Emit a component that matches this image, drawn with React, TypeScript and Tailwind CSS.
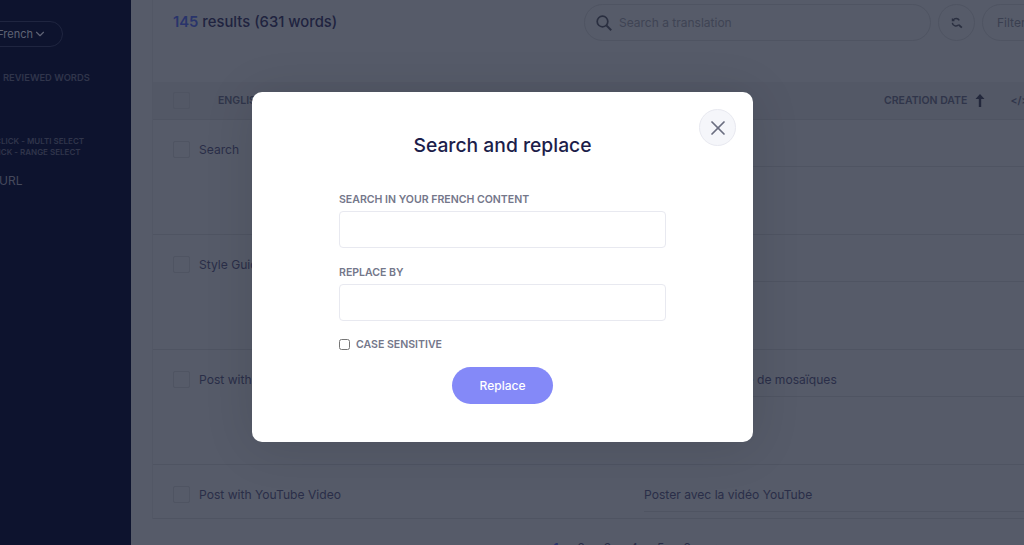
import { ChevronDown, X } from "lucide-react";

const rows = [
  { en: "Search", fr: "", h: "h-[115px]" },
  { en: "Style Guide", fr: "", h: "h-[115px]" },
  { en: "Post with Gallery", fr: "Poster avec galerie de mosaïques", h: "h-[115px]" },
  { en: "Post with YouTube Video", fr: "Poster avec la vidéo YouTube", h: "h-[55px]" },
];

function SearchReplaceIcon() {
  return (
    <svg width="12" height="12" viewBox="0 0 12 12" fill="none" stroke="currentColor" strokeWidth="1.4">
      <path d="M8.3 3.4A3.6 3.6 0 0 0 2.1 3.2" />
      <path d="M1.3 5.8A3.6 3.6 0 0 0 7.7 7.6" />
      <path d="M7.8 7.8 10.8 10.6" strokeWidth="1.8" />
      <path d="M0.8 3.6H3.4M1.4 1.4V3.6" strokeWidth="1.2" />
    </svg>
  );
}

function SearchIcon() {
  return (
    <svg width="16" height="16" viewBox="0 0 16 16" fill="none" stroke="currentColor" strokeWidth="1.7">
      <circle cx="6.5" cy="6.5" r="5.3" />
      <path d="M10.4 10.4 15.2 15.2" strokeWidth="2" />
    </svg>
  );
}

function SortArrow() {
  return (
    <svg width="10" height="13" viewBox="0 0 10 13" className="ml-[8px] shrink-0 text-[#23283c]" fill="currentColor">
      <path d="M5 0 9.5 5H6.2V13H3.8V5H0.5Z" />
    </svg>
  );
}

export default function App() {
  return (
    <div className="relative flex h-[545px] w-[1024px] overflow-hidden bg-[#565b69] font-['Inter',sans-serif]">
      {/* Sidebar */}
      <aside className="w-[131px] shrink-0 overflow-hidden bg-[#0d132e]">
        <div className="-ml-[40px] w-[171px]">
          <div className="mt-[21px] ml-[12px] flex h-[26px] w-[91px] items-center justify-end rounded-full border border-[#1f2540] pr-[15px] text-[11px] leading-[14px] whitespace-nowrap text-[#5f6375]">
            French <ChevronDown size={14} strokeWidth={2} />
          </div>
          <p className="mt-[25px] ml-[43px] text-[9.4px] leading-[11px] font-semibold whitespace-nowrap text-[#30354b]">
            REVIEWED WORDS
          </p>
          <div className="mt-[53px] ml-[35px] text-[8px] leading-[11px] font-semibold whitespace-nowrap text-[#30354b]">
            <p>CLICK - MULTI SELECT</p>
            <p className="-ml-[1px]">LICK - RANGE SELECT</p>
          </div>
          <p className="mt-[15px] ml-[39px] text-[12px] leading-[15px] text-[#45495c]">URL</p>
        </div>
      </aside>

      {/* Main */}
      <main className="flex min-w-0 flex-1 flex-col pl-[21px]">
        <div className="flex h-[520px] flex-col border-l border-[#525765]">
          <header className="flex h-[82px] shrink-0 pt-[4px] pl-[20px]">
            <h1 className="mt-[8px] w-[411px] shrink-0 text-[14.8px] leading-[20px] font-medium text-[#20233f]">
              <span className="font-semibold text-[#29346b]">145</span> results (631 words)
            </h1>
            <div className="flex h-[37px] w-[347px] shrink-0 items-center gap-[7px] rounded-full border border-[#4f5462] pl-[11px] text-[12px] text-[#3f4454]">
              <span className="text-[#2a2f40]">
                <SearchIcon />
              </span>
              Search a translation
            </div>
            <div className="ml-[7px] flex size-[37px] shrink-0 items-center justify-center rounded-full border border-[#4f5462] text-[#2a2f40]">
              <SearchReplaceIcon />
            </div>
            <div className="ml-[7px] flex h-[37px] w-[80px] shrink-0 items-center rounded-full border border-[#4f5462] pl-[14px] text-[12px] text-[#3a3f50]">
              Filter
            </div>
          </header>

          <div className="flex h-[38px] shrink-0 items-center border-b border-[#4f5462] bg-[#535866] pl-[20px] text-[10.5px] font-semibold text-[#30354a]">
            <span className="size-[17px] shrink-0 rounded-[2px] border border-[#4f5462]" />
            <span className="ml-[28px] w-[666px] shrink-0">ENGLISH</span>
            <span className="shrink-0">CREATION DATE</span>
            <SortArrow />
            <span className="ml-[25px] shrink-0">&lt;/&gt;</span>
          </div>

          {rows.map((row) => (
            <div key={row.en} className={`${row.h} flex shrink-0 border-b border-[#4f5462] pl-[20px] last:h-[54px]`}>
              <span className="mt-[21px] size-[17px] shrink-0 rounded-[2px] border border-[#4f5462]" />
              <span className="mt-[21px] ml-[9px] w-[445px] shrink-0 text-[12.1px] leading-[17px] text-[#2a2e48]">
                {row.en}
              </span>
              <div className="h-[47px] flex-1 border-b border-[#4f5462] pt-[21px] text-[12.1px] leading-[17px] text-[#2a2e48]">
                {row.fr}
              </div>
            </div>
          ))}
        </div>

        <div className="mt-[21px] flex gap-[19px] pl-[371px] text-[12px] leading-[15px] text-[#2a2e48]">
          <span>←</span>
          <span className="font-semibold text-[#29346b]">1</span>
          <span>2</span>
          <span>3</span>
          <span>4</span>
          <span>5</span>
          <span>6</span>
          <span>→</span>
        </div>
      </main>

      {/* Modal */}
      <div className="absolute top-[92px] left-[252px] flex h-[350px] w-[501px] flex-col items-center rounded-[10px] bg-white pt-[41px] shadow-[0_4px_50px_rgba(0,0,0,0.12)]">
        <button className="absolute top-[17px] right-[17px] flex size-[37px] items-center justify-center rounded-full border border-[#e8e9f0] bg-[#f5f6fa] text-[#6b6e80]">
          <X size={24} strokeWidth={1.7} />
        </button>
        <h2 className="text-[19.3px] leading-[24px] font-medium text-[#1c1d4a]">Search and replace</h2>

        <div className="mt-[36px] w-[327px]">
          <label className="block text-[10.55px] leading-[13px] font-semibold text-[#74778a]">
            SEARCH IN YOUR FRENCH CONTENT
          </label>
          <input className="mt-[5px] block h-[37px] w-full rounded-[4px] border border-[#e8e9f0]" />
          <label className="mt-[18px] block text-[10.55px] leading-[13px] font-semibold text-[#74778a]">
            REPLACE BY
          </label>
          <input className="mt-[5px] block h-[37px] w-full rounded-[4px] border border-[#e8e9f0]" />
          <label className="mt-[17px] flex items-center gap-[6px] text-[10.55px] leading-[13px] font-semibold text-[#74778a]">
            <input type="checkbox" className="size-[11px]" />
            CASE SENSITIVE
          </label>
        </div>

        <button className="mt-[16px] h-[37px] w-[101px] rounded-full bg-[#8489f8] text-[12px] font-medium text-white">
          Replace
        </button>
      </div>
    </div>
  );
}
